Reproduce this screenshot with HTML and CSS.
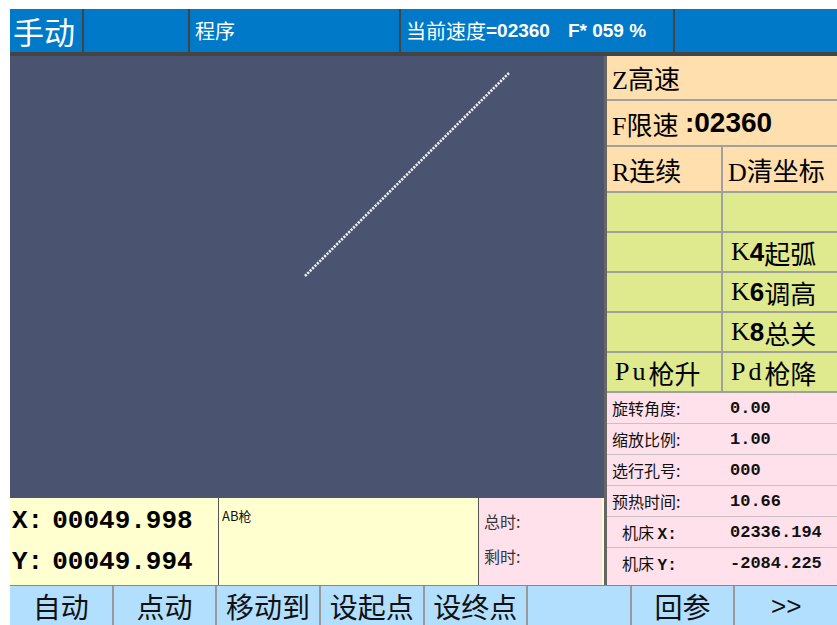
FILE: index.html
```html
<!DOCTYPE html>
<html lang="zh">
<head>
    <meta charset="UTF-8">
    <title>手动</title>
    <link rel="stylesheet" href="styles.css">
</head>
<body>
    <div class="screen">
        <div class="topbar">
            <div class="seg mode">手动</div>
            <div class="seg"></div>
            <div class="seg prog">程序</div>
            <div class="seg speed">当前速度<span class="num">=02360</span><span class="num feed">F* 059 %</span></div>
            <div class="seg"></div>
        </div>
        <div class="rule"></div>
        <div class="main">
            <div class="left">
                <div class="canvas">
                    <!-- toolpath preview -->
                    <svg width="594" height="441" viewBox="0 0 594 441">
                        <line x1="295" y1="220" x2="499" y2="17" stroke="#eef0f4" stroke-width="2.6" stroke-dasharray="2.2 1.2"/>
                    </svg>
                </div>
                <div class="info">
                    <div class="coords">
                        <div class="coord">X:<span class="val">00049.998</span></div>
                        <div class="coord">Y:<span class="val">00049.994</span></div>
                    </div>
                    <div class="torch">AB枪</div>
                    <div class="timers">
                        <div>总时:</div>
                        <div>剩时:</div>
                    </div>
                </div>
            </div>
            <div class="panel">
                <div class="keys">
                    <div class="key peach wide">Z高速</div>
                    <div class="key peach wide">F限速&nbsp;<b class="colon">:02360</b></div>
                    <div class="key peach">R连续</div>
                    <div class="key peach">D清坐标</div>
                    <div class="key green"></div>
                    <div class="key green"></div>
                    <div class="key green"></div>
                    <div class="key green ind">K<b>4</b>起弧</div>
                    <div class="key green"></div>
                    <div class="key green ind">K<b>6</b>调高</div>
                    <div class="key green"></div>
                    <div class="key green ind">K<b>8</b>总关</div>
                    <div class="key green pu"><span class="lat">Pu</span>枪升</div>
                    <div class="key green ind"><span class="lat">Pd</span>枪降</div>
                </div>
                <div class="params">
                    <div class="param"><span class="label">旋转角度:</span><span class="pval">0.00</span></div>
                    <div class="param"><span class="label">缩放比例:</span><span class="pval">1.00</span></div>
                    <div class="param"><span class="label">选行孔号:</span><span class="pval">000</span></div>
                    <div class="param"><span class="label">预热时间:</span><span class="pval">10.66</span></div>
                    <div class="param"><span class="label sub">机床 <b>X:</b></span><span class="pval">02336.194</span></div>
                    <div class="param"><span class="label sub">机床 <b>Y:</b></span><span class="pval">-2084.225</span></div>
                </div>
            </div>
        </div>
        <div class="toolbar">
            <div class="btn">自动</div>
            <div class="btn">点动</div>
            <div class="btn">移动到</div>
            <div class="btn">设起点</div>
            <div class="btn">设终点</div>
            <div class="btn"></div>
            <div class="btn">回参</div>
            <div class="btn arrows">&gt;&gt;</div>
        </div>
    </div>
</body>
</html>
```

FILE: styles.css
```css
body {
    margin: 0;
    background-color: #fff;
    font-family: "Noto Sans CJK SC", sans-serif;
    overflow: hidden;
}
.screen {
    margin: 9px 0 0 10px;
    width: 827px;
}
.topbar {
    display: grid;
    grid-template-columns: 72px 104px 209px 272px 162px;
    column-gap: 2px;
    height: 43px;
    background-color: #444;
}
.seg {
    background-color: #007ac8;
    color: #fff;
    display: flex;
    align-items: center;
    white-space: nowrap;
    overflow: hidden;
}
.mode {
    font-size: 31px;
    padding-left: 3px;
}
.prog {
    font-size: 20px;
    padding-left: 5px;
}
.speed {
    font-size: 20px;
    padding-left: 5px;
}
.speed .num {
    font-family: "Liberation Sans", sans-serif;
    font-weight: bold;
    font-size: 19px;
}
.speed .feed {
    margin-left: 18px;
}
.rule {
    height: 4px;
    background-color: #444;
}
.main {
    display: flex;
    height: 529px;
}
.left {
    width: 594px;
    display: flex;
    flex-direction: column;
}
.canvas {
    height: 441px;
    background-color: #4a5470;
}
.canvas svg {
    display: block;
}
.info {
    height: 87px;
    border-top: 1px solid #555;
    display: flex;
    background-color: #ffffd0;
}
.coords {
    width: 209px;
    border-right: 1px solid #555;
    display: flex;
    flex-direction: column;
    justify-content: space-around;
    padding: 2px 0 2px 2px;
    box-sizing: border-box;
}
.coord {
    font-family: "Liberation Mono", monospace;
    font-weight: bold;
    font-size: 26px;
    line-height: 34px;
    color: #000;
}
.coord .val {
    margin-left: 9px;
}
.torch {
    width: 260px;
    border-right: 1px solid #555;
    font-size: 13px;
    padding: 8px 0 0 3px;
    box-sizing: border-box;
    color: #111;
}
.timers {
    width: 123px;
    background-color: #ffe1ec;
    font-size: 16px;
    color: #333;
    padding: 11px 0 0 5px;
    box-sizing: border-box;
    display: flex;
    flex-direction: column;
    gap: 11px;
}
.panel {
    width: 230px;
    border-left: 3px solid #666;
    display: flex;
    flex-direction: column;
    background-color: #ffe1ec;
}
.keys {
    display: grid;
    grid-template-columns: 114px 114px;
    grid-template-rows: 43px 44px 44px repeat(5, 38px);
    gap: 2px;
    background-color: #a0a0a0;
    padding-bottom: 2px;
}
.key {
    display: flex;
    align-items: center;
    font-family: "Liberation Serif", "Noto Sans CJK SC", serif;
    font-size: 26px;
    color: #000;
    white-space: nowrap;
    overflow: hidden;
    padding-left: 5px;
}
.key b {
    font-family: "Liberation Sans", sans-serif;
    font-weight: bold;
}
.key .colon {
    font-size: 28px;
}
.key .lat {
    letter-spacing: 3px;
}
.wide {
    grid-column: 1 / 3;
}
.ind {
    padding-left: 8px;
}
.pu {
    padding-left: 8px;
}
.peach {
    background-color: #ffdfae;
}
.green {
    background-color: #dfe98e;
}
.params {
    display: flex;
    flex-direction: column;
}
.param {
    height: 30px;
    border-bottom: 1px solid #c9bfc4;
    display: flex;
    align-items: center;
    font-size: 16px;
    color: #111;
    white-space: pre;
}
.param:last-child {
    border-bottom: none;
}
.label {
    width: 123px;
    padding-left: 5px;
    box-sizing: border-box;
}
.label.sub {
    padding-left: 15px;
}
.label b {
    font-family: "Liberation Mono", monospace;
}
.pval {
    font-family: "Liberation Mono", monospace;
    font-size: 17px;
    font-weight: bold;
}
.toolbar {
    display: grid;
    grid-template-columns: repeat(8, 1fr);
    column-gap: 2px;
    height: 40px;
    background-color: #999;
    border-top: 1px solid #888;
}
.btn {
    background-color: #b3dfff;
    display: flex;
    align-items: center;
    justify-content: center;
    font-size: 28px;
    color: #111;
    white-space: nowrap;
}
.arrows {
    font-family: "Liberation Sans", sans-serif;
    font-size: 26px;
}
```
